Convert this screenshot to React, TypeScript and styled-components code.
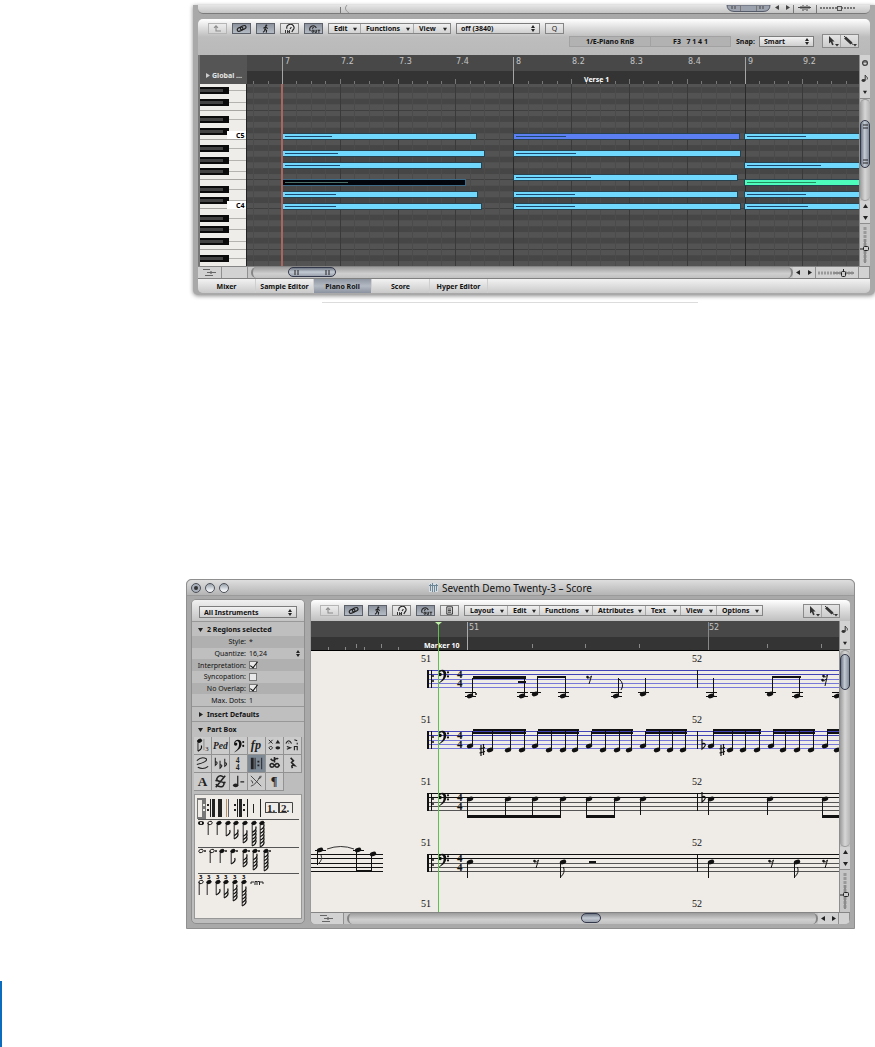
import React from "react";
import styled, { createGlobalStyle, css } from "styled-components";

const sans = `"Noto Sans", "Open Sans", sans-serif`;
const range = (n: number) => Array.from({ length: n }, (_, i) => i);

const GlobalStyle = createGlobalStyle`
  * { box-sizing: border-box; }
  body { margin: 0; background: #fff; font-family: ${sans}; color: #111; }
  button, select, input { font: inherit; color: inherit; margin: 0; padding: 0; border-radius: 0; }
  svg { display: block; flex: none; }
`;

/* ---------- page ---------- */

const Page = styled.main`
  min-height: 100vh;
  padding-top: 5px;
  display: flex;
  flex-direction: column;
  overflow: hidden;
`;
const FigureRule = styled.hr`
  width: 376px;
  height: 1px;
  border: 0;
  margin: 7px 0 0 322px;
  background: #dcdcdc;
`;
const PageEdge = styled.div`
  width: 2px;
  height: 66px;
  margin-top: 52px;
  background: #0b6cbd;
`;

/* ---------- shared chrome ---------- */

const steel = "linear-gradient(#8f97a3, #b4bac3 50%, #8b93a0)";

const Panel = styled.div`
  background: #bdbdbd;
  border-radius: 5px;
  overflow: hidden;
  display: flex;
  flex-direction: column;
  min-width: 0;
`;
const ToolButton = styled.button<{ $on?: boolean; $dim?: boolean }>`
  width: 19px;
  height: 11px;
  flex: none;
  display: flex;
  align-items: center;
  justify-content: center;
  border: 1px solid ${(p) => (p.$dim ? "#b5b5b5" : p.$on ? "#5b6069" : "#858585")};
  background: ${(p) => (p.$on ? "linear-gradient(#8d949f, #b5bbc4)" : "linear-gradient(#ececec, #d4d4d4)")};
  color: ${(p) => (p.$dim ? "#8c8c8c" : "#222")};
  font-size: 7px;
  line-height: 9px;
`;
const MenuBar = styled.div`
  display: flex;
  height: 11px;
  border: 1px solid #858585;
  background: linear-gradient(#f0f0f0, #d2d2d2);
`;
const MenuButton = styled.button<{ $w: number }>`
  width: ${(p) => p.$w}px;
  border: 0;
  border-right: 1px solid #a8a8a8;
  background: none;
  display: flex;
  align-items: center;
  justify-content: space-between;
  padding: 0 3px 0 5px;
  font-size: 7px;
  line-height: 9px;
  font-weight: 700;
  &:last-child { border-right: 0; }
`;
const SelectBox = styled.span<{ $w?: number; $h?: number; $plain?: boolean }>`
  width: ${(p) => (p.$w ? p.$w + "px" : "auto")};
  height: ${(p) => p.$h ?? 11}px;
  display: flex;
  align-items: center;
  padding-right: 4px;
  ${(p) =>
    !p.$plain &&
    css`
      border: 1px solid #7c7c7c;
      background: linear-gradient(#f2f2f2, #cfcfcf);
    `}
  select {
    appearance: none;
    border: 0;
    background: none;
    flex: 1;
    min-width: 0;
    height: 9px;
    padding-left: ${(p) => (p.$plain ? 0 : 4)}px;
    font-size: 7px;
    line-height: 9px;
    font-weight: ${(p) => (p.$plain ? 400 : 700)};
  }
`;
const ToolPair = styled.div`
  display: flex;
  width: 37px;
  height: 14px;
  border: 1px solid #8a8a8a;
  background: linear-gradient(#e4e4e4, #cccccc);
`;
const PairButton = styled.button`
  flex: 1;
  border: 0;
  background: none;
  display: flex;
  align-items: center;
  justify-content: center;
  & + & { border-left: 1px solid #a5a5a5; }
`;

const Tri = ({ d = "down", c = "#222", s = 5 }: { d?: string; c?: string; s?: number }) => {
  const p: Record<string, string> = {
    down: "0,1 5,1 2.5,5",
    up: "0,4 5,4 2.5,0",
    left: "4,0 4,5 0,2.5",
    right: "1,0 1,5 5,2.5",
  };
  return (
    <svg width={s} height={s} viewBox="0 0 5 5" aria-hidden>
      <polygon points={p[d]} fill={c} />
    </svg>
  );
};
const UpDown = () => (
  <svg width="4" height="7" aria-hidden>
    <polygon points="0,3 2,0 4,3" fill="#222" />
    <polygon points="0,4 2,7 4,4" fill="#222" />
  </svg>
);

const Glyph = ({ name }: { name: string }) => (
  <svg width="15" height="9" viewBox="0 0 15 9" fill="none" stroke="currentColor" strokeWidth="1.1" aria-hidden>
    {name === "up" && <path d="M6 7.5V2M4 3.8L6 1.8 8 3.8M6 7h5" />}
    {name === "link" && (
      <>
        <ellipse cx="6" cy="5.2" rx="3" ry="1.8" transform="rotate(-25 6 5)" />
        <ellipse cx="9.3" cy="3.8" rx="3" ry="1.8" transform="rotate(-25 9 4)" />
      </>
    )}
    {name === "run" && (
      <>
        <circle cx="8.3" cy="1.4" r="1" fill="currentColor" stroke="none" />
        <path d="M7.8 2.5L7 5.2 8.6 6.4 8.3 8.6M7 5.2L6.6 6.8 5 8.4M5.4 4.2L7.6 3 9.8 4.6" />
      </>
    )}
    {name === "in" && (
      <>
        <path d="M5 4.8A3.6 3.4 0 1 1 11 6M9.8 8L11.2 5.6M8 5L9.4 3.2" />
        <path d="M3.5 6V9M5.5 9V6.400l2 2.600V6" strokeWidth="0.9" />
      </>
    )}
    {name === "out" && (
      <>
        <path d="M4.4 7A3.4 3.2 0 1 1 10.3 4M6.200 4.600L7.6 3" />
        <path d="M6 6.2h1.6v2H6zM9 5.8v2.6h1.6V5.8M11.6 6.2h2.6M12.9 6v3" strokeWidth="0.9" />
      </>
    )}
    {name === "page" && <path d="M4.8.8h5.6v7.4H4.8zM6 3h3M6 4.6h3M6 6.2h3" strokeWidth="0.9" />}
  </svg>
);

const Tools = () => (
  <ToolPair>
    <PairButton aria-label="Pointer tool">
      <svg width="14" height="12" aria-hidden>
        <path d="M4 1v7.6l1.8-1.6 1.3 3.2 1.6-.7-1.4-3H9.6z" fill="#333" />
        <polygon points="10,9 14,9 12,11.5" fill="#333" />
      </svg>
    </PairButton>
    <PairButton aria-label="Pencil tool">
      <svg width="15" height="12" aria-hidden>
        <path d="M3 2.5L9.5 8.5" stroke="#333" strokeWidth="2.8" />
        <path d="M2 1l9 8.6" stroke="#333" strokeWidth="1" />
        <polygon points="11,9 15,9 13,11.5" fill="#333" />
      </svg>
    </PairButton>
  </ToolPair>
);

const SwitchButtons = () => (
  <>
    <ToolButton $dim aria-label="Up one level"><Glyph name="up" /></ToolButton>
    <ToolButton $on aria-label="Link"><Glyph name="link" /></ToolButton>
    <ToolButton $on aria-label="Catch playhead"><Glyph name="run" /></ToolButton>
    <ToolButton aria-label="MIDI in"><Glyph name="in" /></ToolButton>
    <ToolButton $on aria-label="MIDI out"><Glyph name="out" /></ToolButton>
  </>
);

const Menus = ({ items }: { items: [string, number][] }) => (
  <MenuBar>
    {items.map(([t, w]) => (
      <MenuButton key={t} $w={w}>
        {t}
        <Tri s={4} />
      </MenuButton>
    ))}
  </MenuBar>
);

/* side rail: icon cell, vertical scroller, arrows and zoom slider */
const Rail = styled.div`
  width: 11px;
  flex: none;
  display: flex;
  flex-direction: column;
  background: #c6c6c6;
  border-left: 1px solid #8d8d8d;
`;
const RailCell = styled.div<{ $h: number }>`
  height: ${(p) => p.$h}px;
  flex: none;
  display: flex;
  flex-direction: column;
  align-items: center;
  justify-content: space-around;
  background: #d2d2d2;
  border-bottom: 1px solid #8d8d8d;
`;
const VTrack = styled.div<{ $top: number }>`
  flex: 1;
  padding-top: ${(p) => p.$top}px;
  border-radius: 5px;
  border: 1px solid #999;
  border-width: 1px 0;
  background: linear-gradient(90deg, #9b9b9b, #d6d6d6 50%, #b5b5b5);
`;
const VThumb = styled.div<{ $h: number }>`
  height: ${(p) => p.$h}px;
  border: 1px solid #33384a;
  border-radius: 5px;
  background: linear-gradient(90deg, #6f7785, #c3cad3 45%, #868e9a);
  display: flex;
  flex-direction: column;
  justify-content: space-between;
  align-items: center;
  padding: 3px 0;
`;
const HRow = styled.div`
  height: 12px;
  flex: none;
  display: flex;
  background: #c6c6c6;
  border-top: 1px solid #858585;
`;
const HBox = styled.div<{ $w: number }>`
  width: ${(p) => p.$w}px;
  flex: none;
  display: flex;
  align-items: center;
  justify-content: space-around;
  background: #d2d2d2;
  border-right: 1px solid #909090;
`;
const HTrack = styled.div<{ $at: string }>`
  flex: 1;
  min-width: 0;
  padding-left: ${(p) => p.$at};
  margin-left: 3px;
  border-radius: 6px;
  border: 1px solid #858585;
  border-width: 0 2px;
  background: linear-gradient(#9c9c9c, #cfcfcf 60%, #c0c0c0);
`;
const HThumb = styled.div<{ $w: number }>`
  width: ${(p) => p.$w}px;
  height: 10px;
  border: 1px solid #33384a;
  border-radius: 5px;
  background: linear-gradient(#6f7785, #c3cad3 50%, #9aa1ad);
  display: flex;
  justify-content: space-between;
  align-items: center;
  padding: 0 5px;
`;
const Grip = ({ v }: { v?: boolean }) => (
  <svg width="5" height="5" aria-hidden>
    <path d={v ? "M1 0v5M4 0v5" : "M0 1h5M0 4h5"} stroke="#222" />
  </svg>
);
const ZoomV = () => (
  <svg width="10" height="42" aria-hidden>
    <path d="M5 3v36" stroke="#999" strokeWidth="3" strokeDasharray="3 1" />
    <path d="M5 15v24" stroke="#8c8c8c" strokeWidth="2" />
    <path d="M0 25h4" stroke="#222" />
    <rect x="3.5" y="22.500" width="5" height="4" rx="1" fill="#ccc" stroke="#222" />
  </svg>
);
const ZoomH = () => (
  <svg width="38" height="10" aria-hidden>
    <path d="M0 5h36" stroke="#999" strokeWidth="3" strokeDasharray="2 1" />
    <path d="M15 5h21" stroke="#8c8c8c" strokeWidth="2" />
    <rect x="23.5" y="3.500" width="4" height="5" rx="1" fill="#ccc" stroke="#222" />
    <path d="M25.500 1v3" stroke="#222" />
  </svg>
);
const TreeGlyph = () => (
  <svg width="16" height="9" aria-hidden>
    <path d="M1 1.500h7M5 4.500h9M3 7.500h8M9 3v3" stroke="#666" strokeWidth="1.200" />
  </svg>
);
const NoteGlyph = () => (
  <svg width="8" height="8" aria-hidden>
    <ellipse cx="2.500" cy="6.500" rx="2" ry="1.400" fill="#333" />
    <path d="M4.200 6.500V1C5 3 7.400 3 6 5.500" fill="none" stroke="#333" />
  </svg>
);

/* ---------- piano roll window ---------- */

const RollWindow = styled.section`
  margin-left: 193px;
  padding: 0 5px 2px;
  background: #a9a9a9;
  box-shadow: 0 1px 4px rgba(0, 0, 0, 0.45);
  border-radius: 0 0 5px 5px;
`;
const UpperSlice = styled.div`
  height: 9px;
  display: flex;
  justify-content: space-between;
  background: linear-gradient(#e6e6e6, #c4c4c4);
  border-bottom: 1px solid #7a7a7a;
  border-radius: 0 0 5px 5px;
  margin-bottom: 5px;
`;
const RollToolbar = styled.div`
  height: 36px;
  padding: 4px 11px 0 10px;
  background: linear-gradient(#fff, #e4e4e4 20%, #bdbdbd 50%, #b9b9b9);
`;
const BarRow = styled.div<{ $end?: boolean; $gap?: number }>`
  display: flex;
  align-items: center;
  gap: ${(p) => p.$gap ?? 5}px;
  justify-content: ${(p) => (p.$end ? "flex-end" : "flex-start")};
`;
const Display = styled.div`
  display: flex;
  height: 11px;
  margin-right: 1px;
  background: #b2b2b2;
  border: 1px solid #a2a2a2;
  font-size: 7px;
  line-height: 9px;
  font-weight: 700;
  text-align: center;
  white-space: pre;
  span { width: 80px; }
  span + span { border-left: 1px solid #a2a2a2; }
`;
const SnapLabel = styled.label`
  display: flex;
  align-items: center;
  gap: 4px;
  margin-right: 4px;
  font-size: 7px;
  font-weight: 700;
`;
const Columns = styled.div`
  display: flex;
  min-width: 0;
  flex: 1;
`;
const KeyColumn = styled.div`
  width: 49px;
  flex: none;
  border-left: 2px solid #777;
`;
const GlobalHead = styled.button`
  width: 47px;
  height: 29px;
  border: 0;
  background: #555;
  color: #e6e6e6;
  display: flex;
  align-items: flex-end;
  gap: 2px;
  padding: 0 0 4px 5px;
  font-size: 7px;
  line-height: 9px;
  font-weight: 700;
  white-space: nowrap;
  svg { margin-bottom: 2px; }
`;
const Canvas = styled.div`
  flex: 1;
  min-width: 0;
`;
const Tabs = styled.div`
  display: flex;
  height: 15px;
  background: linear-gradient(#f2f2f2, #c9c9c9);
  border-top: 1px solid #808080;
`;
const Tab = styled.button<{ $on?: boolean }>`
  width: 58px;
  border: 0;
  border-right: 1px solid #cfcfcf;
  background: ${(p) => (p.$on ? steel : "none")};
  font-size: 7px;
  line-height: 11px;
  font-weight: 700;
  white-space: nowrap;
`;

const BEAT = 57.83;
const ROW = 5.8;
const BLACK = [1, 3, 6, 8, 10];
const C5_Y = 52.4;
const semis = range(33).map((i) => 9 - i);
const isBlack = (s: number) => BLACK.includes(((s % 12) + 12) % 12);

const RollRuler = () => (
  <svg width="100%" height="29" fontFamily='"DejaVu Sans", sans-serif' fontSize="8" fill="#c4c4c4">
    <rect width="100%" height="16" fill="#484848" />
    <rect y="16" width="100%" height="13" fill="#343434" />
    {range(120).map((i) => {
      const x = Math.round(35 + (i - 2) * (BEAT / 4));
      const top = (i - 2) % 16 === 0 ? 2 : (i - 2) % 4 === 0 ? 24 : 26;
      return <path key={i} d={`M${x + 0.5} ${top}V29`} stroke={top === 2 ? "#a5a5a5" : "#777"} />;
    })}
    {range(10).map((i) => {
      const bar = 7 + Math.floor(i / 4);
      return (
        <text key={i} x={Math.round((i % 4 ? 36 : 38) + i * BEAT)} y="9">
          {i % 4 ? `${bar}.${(i % 4) + 1}` : bar}
        </text>
      );
    })}
    <text x="337" y="27" fill="#fff" fontFamily={sans} fontSize="7" fontWeight="700">Verse 1</text>
  </svg>
);

type N = [number, number, number, number, string?];
const notes: N[] = [
  [0, 36, 194, 50], [0, 267, 226, 53, "#5c80f4"], [0, 498, 226, 62],
  [-3, 36, 202, 56], [-3, 267, 227, 63],
  [-5, 36, 199, 58], [-5, 498, 226, 77],
  [-7, 267, 224, 78],
  [-8, 36, 183, 66, "#02060c"], [-8, 498, 226, 72, "#4dfcbb"],
  [-10, 36, 195, 54], [-10, 267, 224, 62], [-10, 498, 226, 62],
  [-12, 36, 199, 54], [-12, 267, 227, 62], [-12, 498, 226, 64],
];
const RollGrid = () => (
  <svg width="100%" height="182">
    <rect width="100%" height="182" fill="#545454" />
    {semis.map((s) => (
      <rect key={s} y={C5_Y - s * ROW - 2.9} width="100%" height={ROW} fill={isBlack(s) ? "#464646" : "#535353"} />
    ))}
    {[-24, -19, -12, -7, 0, 5].map((s) => (
      <rect key={s} y={Math.round(C5_Y - s * ROW + 2.4)} width="100%" height="1" fill="#3f3f3f" />
    ))}
    {range(120).map((i) => {
      const k = i - 2;
      const x = Math.round(35 + k * (BEAT / 4));
      return <path key={i} d={`M${x + 0.5} 0V182`} stroke={k % 16 === 0 ? "#2a2a2a" : k % 4 === 0 ? "#3a3a3a" : "#4b4b4b"} />;
    })}
    {notes.map(([s, x, w, v, c], i) => {
      const y = Math.round(C5_Y - s * ROW - 2.4);
      return (
        <g key={i}>
          <rect x={x - 0.5} y={y - 0.5} width={w} height="6" fill={c ?? "#6fd8fc"} stroke={c === "#02060c" ? "#3d6a86" : "#28434f"} />
          <path d={`M${x + 2} ${y + 2.5}h${v - 3}`} stroke={c === "#02060c" ? "#4b7069" : c === "#4dfcbb" ? "#23915f" : "#1d4a70"} />
        </g>
      );
    })}
    <rect x="34" width="2" height="182" fill="#a8665f" />
  </svg>
);
const Keyboard = () => (
  <svg width="47" height="182" fontFamily={sans} fontSize="7" fontWeight="700">
    <rect width="47" height="182" fill="#efedea" />
    {semis.map((s) => {
      const y = C5_Y - s * ROW;
      if (isBlack(s))
        return (
          <g key={s}>
            <path d={`M29 ${Math.round(y) + 0.5}H47`} stroke="#b5b3b0" />
            <rect y={Math.round(y) - 3} width="29" height="7" fill="#0b0b0b" />
            <rect y={Math.round(y) - 1} width="23" height="3" fill="#424242" />
          </g>
        );
      return [0, 5].includes(((s % 12) + 12) % 12) ? (
        <path key={s} d={`M0 ${Math.round(y + 2.4) + 0.5}H47`} stroke="#a8a6a3" />
      ) : null;
    })}
    {[["C5", 47], ["C4", 117]].map(([t, y]) => (
      <g key={t}>
        <rect x="27" y={y} width="20" height="8" fill="#fff" />
        <text x="36" y={Number(y) + 7}>{t}</text>
      </g>
    ))}
    <rect x="46" width="1" height="182" fill="#222" />
  </svg>
);

const PianoRoll = () => (
  <RollWindow aria-label="Piano Roll">
    <UpperSlice>
      <svg width="160" height="8" aria-hidden>
        <path d="M142.500 2v6" stroke="#777" />
        <path d="M149 0q-4 4 2 8" stroke="#999" fill="none" />
      </svg>
      <svg width="145" height="8" aria-hidden>
        <path d="M2 0q0 6 7 6.500h29q7 0 7-6.500z" fill="#9da3ae" stroke="#555b68" />
        <path d="M15.500 0v6M31.500 0v6M68.500 0v8M91.500 0v8" stroke="#777" />
        <path d="M7 1v3M10 1v3M35 1v3M38 1v3" stroke="#444" />
        <path d="M95 3h35" stroke="#777" strokeWidth="2" strokeDasharray="2 1" />
        <polygon points="50,2.500 54,0 54,5" fill="#444" />
        <polygon points="65,2.500 61,0 61,5" fill="#444" />
        <path d="M73 2.500h13M76 1v3M78 0v6M80 1v4M82 0v6M84 1v3" stroke="#444" />
        <rect x="112.500" y="1.500" width="4" height="4" fill="#ccc" stroke="#555" />
      </svg>
    </UpperSlice>
    <Panel>
      <RollToolbar>
        <BarRow>
          <SwitchButtons />
          <Menus items={[["Edit", 32], ["Functions", 53], ["View", 36]]} />
          <SelectBox $w={84}>
            <select aria-label="Quantize"><option>off (3840)</option></select>
            <UpDown />
          </SelectBox>
          <ToolButton>Q</ToolButton>
        </BarRow>
        <BarRow $end $gap={4}>
          <Display>
            <span>1/E-Piano RnB</span>
            <span>F3{"   "}7 1 4 1</span>
          </Display>
          <SnapLabel>
            Snap:
            <SelectBox $w={55}>
              <select><option>Smart</option></select>
              <UpDown />
            </SelectBox>
          </SnapLabel>
          <Tools />
        </BarRow>
      </RollToolbar>
      <Columns>
        <KeyColumn>
          <GlobalHead><Tri d="right" c="#ccc" />Global ...</GlobalHead>
          <Keyboard />
        </KeyColumn>
        <Canvas>
          <RollRuler />
          <RollGrid />
        </Canvas>
        <Rail>
          <RailCell $h={44}>
            <svg width="8" height="8" aria-hidden>
              <circle cx="4" cy="4" r="2.400" fill="none" stroke="#444" strokeWidth="1.300" />
              <path d="M2 3h4" stroke="#444" />
            </svg>
            <NoteGlyph />
            <Tri s={4} />
          </RailCell>
          <VTrack $top={20}>
            <VThumb $h={48}><Grip /><Grip /></VThumb>
          </VTrack>
          <RailCell $h={23}><Tri d="up" /><Tri /></RailCell>
          <ZoomV />
        </Rail>
      </Columns>
      <HRow>
        <HBox $w={24}><TreeGlyph /></HBox>
        <HBox $w={26} />
        <HTrack $at="35px">
          <HThumb $w={48}><Grip v /><Grip v /></HThumb>
        </HTrack>
        <HBox $w={23}><Tri d="left" /><Tri d="right" /></HBox>
        <HBox $w={43}><ZoomH /></HBox>
        <HBox $w={11} />
      </HRow>
      <Tabs>
        {["Mixer", "Sample Editor", "Piano Roll", "Score", "Hyper Editor"].map((t) => (
          <Tab key={t} $on={t === "Piano Roll"}>{t}</Tab>
        ))}
      </Tabs>
    </Panel>
  </RollWindow>
);

/* ---------- score window ---------- */

const ScoreWindow = styled.section`
  margin: 276px 20px 0 186px;
  background: #a9a9a9;
  border: 1px solid #8f8f8f;
  border-radius: 5px 5px 0 0;
  padding-bottom: 4px;
`;
const TitleBar = styled.header`
  height: 16px;
  display: grid;
  grid-template-columns: 1fr auto 1fr;
  align-items: center;
  padding: 0 24px 0 4px;
  border-radius: 5px 5px 0 0;
  background: linear-gradient(#dedede, #b4b4b4);
  border-bottom: 1px solid #9a9a9a;
`;
const Lights = styled.div`
  display: flex;
  gap: 4px;
`;
const Light = styled.button<{ $dot?: boolean }>`
  width: 10px;
  height: 10px;
  border: 1px solid #4c5159;
  border-radius: 50%;
  background: ${(p) =>
    p.$dot
      ? "radial-gradient(circle, #333 25%, #a9b0b9 45%)"
      : "linear-gradient(#9aa1aa, #d9dee4 60%, #fff)"};
`;
const Title = styled.h1`
  margin: 0;
  display: flex;
  align-items: center;
  gap: 4px;
  font-size: 10px;
  line-height: 14px;
  font-weight: 400;
  white-space: nowrap;
`;
const ScoreBody = styled.div`
  display: flex;
  gap: 5px;
  padding: 3px 4px 0;
`;
const Sidebar = styled(Panel)`
  width: 114px;
  flex: none;
  border: 1px solid #8f8f8f;
`;
const SideTop = styled.div`
  height: 21px;
  padding: 6px 7px 0;
  background: linear-gradient(#f0f0f0, #c4c4c4);
`;
const SideHead = styled.button<{ $h: number }>`
  height: ${(p) => p.$h}px;
  border: 0;
  border-top: 1px solid #989898;
  background: #bfbfbf;
  display: flex;
  align-items: center;
  gap: 4px;
  padding-left: 6px;
  font-size: 7px;
  line-height: 9px;
  font-weight: 700;
`;
const Params = styled.div`
  height: 70px;
  display: grid;
  grid-template-rows: repeat(6, 1fr);
`;
const Param = styled.div`
  display: grid;
  grid-template-columns: 54px 1fr;
  gap: 3px;
  align-items: center;
  font-size: 7px;
  line-height: 9px;
  background: #bfbfbf;
  &:nth-child(odd) { background: #b0b0b0; }
  label { text-align: right; white-space: nowrap; }
`;
const Check = styled.input`
  appearance: none;
  width: 8px;
  height: 8px;
  border: 1px solid #777;
  background: #e8e8e8;
  display: block;
  &:checked::after {
    content: "";
    display: block;
    width: 3px;
    height: 7px;
    margin: -2px 0 0 2px;
    border: solid #111;
    border-width: 0 1px 1px 0;
    transform: rotate(38deg);
  }
`;
const Palette = styled.div`
  display: grid;
  grid-template-columns: repeat(6, 18px);
  grid-auto-rows: 18px;
  padding: 0 2px;
`;
const PaletteButton = styled.button<{ $on?: boolean }>`
  border: 0;
  border-right: 1px solid #929292;
  border-bottom: 1px solid #929292;
  background: ${(p) => (p.$on ? "#7e8996" : "#cbcbcb")};
`;
const PartList = styled.div`
  margin: 3px 2px 4px;
  flex: 1;
  background: #efebe6;
  border: 1px solid #979797;
`;
const ScorePanel = styled(Panel)`
  flex: 1;
  border: 1px solid #9a9a9a;
  border-width: 1px 0 0 1px;
`;
const ScoreToolbar = styled.div`
  height: 21px;
  flex: none;
  display: flex;
  align-items: center;
  justify-content: space-between;
  padding: 0 10px 0 9px;
  background: linear-gradient(#fff, #e2e2e2 40%, #bfbfbf);
`;

const SmallNote = ({ x, y, h, flags = 0, open, dot }: { x: number; y: number; h: number; flags?: number; open?: boolean; dot?: boolean }) => (
  <g stroke="#111" strokeWidth="0.9" fill="none">
    <ellipse cx={x} cy={y} rx="2.300" ry="1.600" fill={open ? "#efebe6" : "#111"} transform={`rotate(-20 ${x} ${y})`} />
    {h > 0 && <path d={`M${x - 1.8} ${y}v${h}`} />}
    {range(flags).map((i) => (
      <path key={i} strokeWidth="1.200" d={`M${x - 1.8} ${y + h - i * 3.4}q5 -2.500 3.500 -6`} />
    ))}
    {dot && <circle cx={x + 4} cy={y} r="0.600" fill="#111" />}
  </g>
);

const PartBoxDrawing = () => (
  <svg width="105" height="121" aria-hidden>
    <rect x="2" y="3" width="9" height="21" fill="#777" />
    <rect x="3" y="5" width="4" height="17" fill="#efebe6" />
    <g fill="#efebe6"><path d="M8 9h2v2H8zM8 14h2v2H8z" /></g>
    <g fill="#222">
      <path d="M12 9h2v2h-2zM12 14h2v2h-2z" />
      <path d="M15 4h1v18h-1zM17 4h3v18h-3zM23 4h4v18h-4zM39 9h2v2h-2zM39 14h2v2h-2zM42 4h1v18h-1zM44 4h3v18h-3zM48 9h2v2h-2zM48 14h2v2h-2zM52 4h1v18h-1zM58 9h1v9h-1zM65 4h1v18h-1z" />
      <path d="M31 4h1v18h-1z" fill="#b58f62" /><path d="M33 4h1v18h-1z" fill="#5f667c" />
    </g>
    <path d="M70.500 18V7.500H83.500V18M84.500 18V7.500H97.500V18M70 17.500h12M85 17.500h7" fill="none" stroke="#444" />
    <g fontFamily='"Liberation Serif", serif' fontWeight="700" fontSize="11" fill="#222">
      <text x="72" y="17">1.</text><text x="86" y="17">2.</text>
    </g>
    <path d="M3 24.500h101M3 52.500h101M3 78.500h101" stroke="#555" />
    <ellipse cx="6" cy="28" rx="3" ry="2" fill="#111" /><ellipse cx="6" cy="28" rx="1" ry="1.300" fill="#efebe6" />
    {[[15, 12, 0], [24, 12, 0], [33, 13, 1], [41, 16, 2], [50, 20, 3], [59, 23, 5], [67, 24, 6]].map(([x, h, f]) => (
      <SmallNote key={x} x={x} y={28} h={h} flags={f} open={x === 15} />
    ))}
    {[[6, 0, 0], [17, 12, 0], [27, 12, 0], [38, 13, 1], [50, 16, 3], [60, 19, 4], [71, 20, 5]].map(([x, h, f]) => (
      <SmallNote key={x} x={x} y={56} h={h} flags={f} open={x < 20} dot />
    ))}
    {[[6, 13, 0], [14, 13, 0], [23, 13, 1], [31, 16, 2], [40, 19, 4], [49, 24, 5]].map(([x, h, f]) => (
      <g key={x}>
        <SmallNote x={x} y={87} h={h} flags={f} open={x === 6} />
        <text x={x - 2} y="84" fontFamily={sans} fontSize="6" fontWeight="700">3</text>
      </g>
    ))}
    <path d="M56 89v-2h3M65 87h3v2M60 90v-3.500h2V90M62.500 86.500h2V90" fill="none" stroke="#222" />
  </svg>
);

const BassClef = ({ x, y, s = 1 }: { x: number; y: number; s?: number }) => (
  <g transform={`translate(${x} ${y}) scale(${s})`} fill="#111">
    <circle cx="2" cy="4.500" r="1.800" />
    <path d="M.2 4C.6-1.400 8.300-1.800 8.300 4.200 8.300 9 3.500 12 0 13.500 3 11 5.800 9 5.600 4.200 5.400.400 2 .2.900 4z" />
    <circle cx="10" cy="2.300" r="1.100" /><circle cx="10" cy="6.400" r="1.100" />
  </g>
);

const serif = '"Liberation Serif", serif';
const palette: [string, React.ReactNode][] = [
  ["Notes", <><SmallNote x={6} y={4} h={11} flags={1} /><path d="M10.500 2v12" stroke="#888" /><text x="12" y="15" fontSize="7" fontFamily={serif}>3</text></>],
  ["Pedal", <text x="1" y="13" fontSize="10" fontStyle="italic" fontWeight="700" fontFamily={serif}>Ped</text>],
  ["Clefs", <BassClef x={4} y={3} />],
  ["Dynamics", <text x="3" y="13" fontSize="13" fontStyle="italic" fontWeight="700" fontFamily={serif}>fp</text>],
  ["Heads", <><path d="M3 3l4 4M7 3L3 7" stroke="#222" /><polygon points="10,7 12.500,3 15,7" /><path d="M5 9.500l2 2-2 2-2-2z" fill="none" stroke="#222" /><ellipse cx="12.500" cy="11.500" rx="2.500" ry="1.800" /></>],
  ["Symbols", <path d="M2 7q3-6 6 0M5 6v1M11 3l3 1M14 6v2M3 10l4 1.500L3 13M11 14v-4h3v4" fill="none" stroke="#222" strokeWidth="1.200" />],
  ["Slurs", <path d="M3 6Q8 1 13 4 15 7 3 10M4 13q6 3 11-1" fill="none" stroke="#222" strokeWidth="1.100" />],
  ["Key signatures", <path d="M3.500 3v8q4-3 0-4M8.500 6v8q4-3 0-4M13.500 4v8q4-3 0-4" fill="none" stroke="#222" strokeWidth="1.100" />],
  ["Time signatures", <g fontFamily={serif} fontWeight="700" fontSize="8"><text x="6" y="8">4</text><text x="6" y="16">4</text></g>],
  ["Bar lines", <path d="M3 3h3v12H3zM7 3h1v12H7zM10 6h2v2h-2zM10 10h2v2h-2zM14 3h1v12h-1z" />],
  ["Trills", <path d="M9 2v6M5 4q2 3 4 1t4-1M4 11q2-4 5 0t5 0q-2-4-5 0t-5 0" fill="none" stroke="#222" strokeWidth="1.700" />],
  ["Rests", <path d="M7 3l3 3-2 2 3 3q-4-1-2 3" fill="none" stroke="#222" strokeWidth="1.700" />],
  ["Text", <text x="4" y="14" fontSize="14" fontWeight="700" fontFamily={serif}>A</text>],
  ["Segno", <><path d="M13 5Q9 1 6 4.500T9 9t2.500 5Q8 16 4 12M14 3L4 15" fill="none" stroke="#222" strokeWidth="1.600" /><circle cx="4.500" cy="8" r="1" /><circle cx="13.500" cy="10" r="1" /></>],
  ["Tempo", <><ellipse cx="6" cy="13" rx="2.800" ry="2" /><path d="M8.200 13V3M11 9.500h4" stroke="#222" strokeWidth="1.300" /></>],
  ["Chord grids", <path d="M3 3l11 11M3 14Q9 12 13 3M3 8q2 0 2 3M11 6q3 0 3-3" fill="none" stroke="#444" />],
  ["Layout", <text x="5" y="13" fontSize="13" fontWeight="700" fontFamily={serif}>¶</text>],
];

/* score sheet drawing */
const TOPS = [19, 80, 142, 203];
const LINES = [0, 4, 9, 13, 17];
const Head = ({ x, y }: { x: number; y: number }) => (
  <ellipse cx={x} cy={y} rx="3.300" ry="2.200" transform={`rotate(-18 ${x} ${y})`} />
);
const Stem = ({ x, a, b }: { x: number; a: number; b: number }) => <rect x={x} y={a} width="1" height={b - a} />;
const EighthRest = ({ x, y, two }: { x: number; y: number; two?: boolean }) => (
  <g>
    <circle cx={x - 1.5} cy={y - 2} r="1.300" />
    <path d={`M${x - 2} ${y - 1}q3 .500 4.500-2L${x} ${y + (two ? 8 : 5)}`} fill="none" stroke="#111" />
    {two && <><circle cx={x - 2.5} cy={y + 2} r="1.300" /><path d={`M${x - 3} ${y + 3}q3 .500 4-2`} fill="none" stroke="#111" /></>}
  </g>
);
const Sharp = ({ x, y }: { x: number; y: number }) => (
  <path d={`M${x - 1} ${y - 5}v11M${x + 1.5} ${y - 6}v11M${x - 2.5} ${y - 1}l5.500 -1.500M${x - 2.5} ${y + 3}l5.500 -1.500`} fill="none" stroke="#111" strokeWidth="1.200" />
);
const Flat = ({ x, y }: { x: number; y: number }) => (
  <path d={`M${x - 1} ${y - 7}v10q5 -4 2.500 -5.500q-1.500 -.500 -2.500 1`} fill="none" stroke="#111" strokeWidth="1.200" />
);
const low: [number, number][] = [[159, 45], [211, 45], [224, 43], [252, 45], [305, 45], [332, 43], [400, 45], [459, 43], [486, 45], [526, 45]];
const groups: [number, number, number[]][] = [
  [162, 214, [159, 179, 197, 211]], [227, 267, [224, 238, 252, 264]], [281, 321, [278, 292, 306, 318]],
  [335, 375, [332, 346, 359, 372]], [402, 449, [400, 419, 432, 446]], [462, 503, [460, 472, 486, 500]], [516, 540, [514, 526, 540]],
];
const ScoreSheet = () => (
  <svg width="100%" height="261" fill="#111">
    <rect width="100%" height="261" fill="#efebe6" />
    {TOPS.map((t, i) =>
      LINES.map((l) => <rect key={t + l} x="116" y={t + l} width="100%" height="1" fill={i < 2 ? (l % 2 ? "#7878d8" : "#4343b8") : l % 2 ? "#555" : "#111"} />)
    )}
    {LINES.map((l) => <rect key={l} y={203 + l} width="72" height="1" />)}
    {TOPS.map((t) => (
      <g key={t}>
        <rect x="116" y={t} width="2" height="18" />
        <rect x="120" y={t} width="1" height="18" />
        <circle cx="122" cy={t + 6} r="1" /><circle cx="122" cy={t + 11} r="1" />
        <BassClef x={127} y={t} />
        <g fontFamily={serif} fontWeight="700" fontSize="11"><text x="146" y={t + 8}>4</text><text x="146" y={t + 17}>4</text></g>
        <rect x="386" y={t} width="1" height="18" />
      </g>
    ))}
    {[...TOPS, 264].map((t) => (
      <g key={t} fontFamily={serif} fontSize="10"><text x="110" y={t - 8}>51</text><text x="381" y={t - 8}>52</text></g>
    ))}
    {/* first staff */}
    {low.map(([x, y]) => (
      <g key={x}>
        <Head x={x} y={y} />
        <rect x={x - 5} y="41" width="11" height="1" />
        {y === 45 && <rect x={x - 5} y="45" width="11" height="1" />}
        <Stem x={x + 2} a={27} b={y} />
      </g>
    ))}
    <path d="M162 25h53v3h-53zM207 30h8v2h-8zM226 25h29v2h-29zM461 25h29v2h-29z" />
    <path d="M308 28q6 5 2 11" fill="none" stroke="#111" />
    <circle cx="165" cy="43" r="1" />
    <EighthRest x={278} y={28} /><EighthRest x={514} y={27} two />
    {/* second staff */}
    {groups.map(([a, b, xs]) => (
      <g key={a}>
        <rect x={a} y="78" width={b - a + 1} height="2" /><rect x={a} y="81" width={b - a + 1} height="2" />
        {xs.map((x, i) => (
          <g key={x}><Head x={x} y={i ? 99 : 95} /><Stem x={x + 2} a={80} b={i ? 99 : 95} /></g>
        ))}
      </g>
    ))}
    <Sharp x={171} y={99} /><Sharp x={411} y={99} />
    <Flat x={392} y={95} /><Flat x={392} y={148} />
    {/* third staff */}
    {[159, 197, 224, 252, 278, 306, 332, 400, 459, 514].map((x) => (
      <g key={x}><Head x={x} y={148} /><Stem x={x - 3} a={148} b={x === 332 || x === 400 || x === 459 ? 164 : 166} /></g>
    ))}
    <path d="M156 164h94v3h-94zM275 164h29v3h-29zM511 164h60v3h-60z" />
    {/* fourth staff */}
    {[159, 252, 400, 486].map((x) => (
      <g key={x}><Head x={x} y={211} /><Stem x={x - 3} a={211} b={227} /></g>
    ))}
    <path d="M249.500 226q5-4 3-10M483.500 226q5-4 3-10" fill="none" stroke="#111" />
    <EighthRest x={225} y={212} /><EighthRest x={460} y={212} /><EighthRest x={514} y={212} />
    <rect x="278" y="210" width="7" height="2" />
    {/* notes left of the start bar */}
    <Head x={9} y={199} /><Head x={47} y={199} /><Head x={62} y={203} />
    <rect x="4" y="199" width="11" height="1" /><rect x="42" y="199" width="11" height="1" />
    <Stem x={6} a={199} b={214} /><Stem x={45} a={199} b={219} /><Stem x={60} a={203} b={219} />
    <path d="M7 213q5-4 3-9M16 198q14-5 27 0" fill="none" stroke="#333" />
    <rect x="45" y="219" width="16" height="2" />
    <rect x="127" width="1" height="261" fill="#5cc24c" />
  </svg>
);

const ScoreRuler = () => (
  <svg width="100%" height="30" fontFamily='"DejaVu Sans", sans-serif' fontSize="8" fill="#c4c4c4">
    <rect width="100%" height="16" fill="#484848" />
    <rect y="16" width="100%" height="14" fill="#343434" />
    {[17, 34, 45, 53, 70, 87, 221, 274, 328, 456, 510].map((x) => (
      <rect key={x} x={x} y={x === 17 || x === 34 || x === 53 || x === 87 ? 26 : 23} width="1" height="4" fill="#888" />
    ))}
    <rect x="156" y="1" width="1" height="28" fill="#aaa" /><rect x="397" y="1" width="1" height="28" fill="#888" />
    <text x="158" y="9">51</text><text x="398" y="9">52</text>
    <text x="113" y="27" fill="#fff" fontFamily={sans} fontSize="7" fontWeight="700">Marker 10</text>
    <rect y="29" width="100%" height="1" fill="#000" />
    <rect x="127" y="1" width="1" height="29" fill="#5cc24c" />
    <polygon points="124,1 131,1 127.500,4" fill="#bff0a8" />
  </svg>
);

const Score = () => (
  <ScoreWindow aria-label="Score">
    <TitleBar>
      <Lights>
        <Light $dot aria-label="Close" /><Light aria-label="Minimize" /><Light aria-label="Zoom" />
      </Lights>
      <Title>
        <svg width="9" height="11" aria-hidden>
          <rect x="0" y="1" width="9" height="9" fill="#d5dde2" />
          <path d="M0 3.500h9M1.500 2v7M3.500 1v9M5.500 3v7M7.500 2v7" stroke="#6d8796" />
        </svg>
        Seventh Demo Twenty-3 – Score
      </Title>
      <span />
    </TitleBar>
    <ScoreBody>
      <Sidebar>
        <SideTop>
          <SelectBox $w={98} $h={12}>
            <select aria-label="Instrument set"><option>All Instruments</option></select>
            <UpDown />
          </SelectBox>
        </SideTop>
        <SideHead $h={15}><Tri />2 Regions selected</SideHead>
        <Params>
          <Param><label htmlFor="style">Style:</label><output id="style">*</output></Param>
          <Param>
            <label htmlFor="quantize">Quantize:</label>
            <SelectBox $plain $h={9}>
              <select id="quantize"><option>16,24</option></select>
              <UpDown />
            </SelectBox>
          </Param>
          <Param><label htmlFor="interp">Interpretation:</label><Check id="interp" type="checkbox" defaultChecked /></Param>
          <Param><label htmlFor="sync">Syncopation:</label><Check id="sync" type="checkbox" /></Param>
          <Param><label htmlFor="overlap">No Overlap:</label><Check id="overlap" type="checkbox" defaultChecked /></Param>
          <Param><label htmlFor="dots">Max. Dots:</label><output id="dots">1</output></Param>
        </Params>
        <SideHead $h={15}><Tri d="right" />Insert Defaults</SideHead>
        <SideHead $h={16}><Tri />Part Box</SideHead>
        <Palette>
          {palette.map(([t, icon]) => (
            <PaletteButton key={t} aria-label={t} $on={t === "Bar lines"}>
              <svg width="17" height="17" viewBox="0 0 18 18" fill="#222" aria-hidden>{icon}</svg>
            </PaletteButton>
          ))}
        </Palette>
        <PartList><PartBoxDrawing /></PartList>
      </Sidebar>
      <ScorePanel>
        <ScoreToolbar>
          <BarRow>
            <SwitchButtons />
            <ToolButton aria-label="Page view"><Glyph name="page" /></ToolButton>
            <Menus items={[["Layout", 43], ["Edit", 32], ["Functions", 53], ["Attributes", 53], ["Text", 35], ["View", 36], ["Options", 45]]} />
          </BarRow>
          <Tools />
        </ScoreToolbar>
        <Columns>
          <Canvas>
            <ScoreRuler />
            <ScoreSheet />
          </Canvas>
          <Rail>
            <RailCell $h={29}><NoteGlyph /><Tri s={4} /></RailCell>
            <VTrack $top={3}><VThumb $h={36} /></VTrack>
            <RailCell $h={23}><Tri d="up" /><Tri /></RailCell>
            <ZoomV />
          </Rail>
        </Columns>
        <HRow>
          <HBox $w={33}><TreeGlyph /></HBox>
          <HTrack $at="43%"><HThumb $w={20} /></HTrack>
          <HBox $w={21}><Tri d="left" /><Tri d="right" /></HBox>
          <HBox $w={11} />
        </HRow>
      </ScorePanel>
    </ScoreBody>
  </ScoreWindow>
);

export default function App() {
  return (
    <>
      <GlobalStyle />
      <Page>
        <PianoRoll />
        <FigureRule />
        <Score />
        <PageEdge />
      </Page>
    </>
  );
}
